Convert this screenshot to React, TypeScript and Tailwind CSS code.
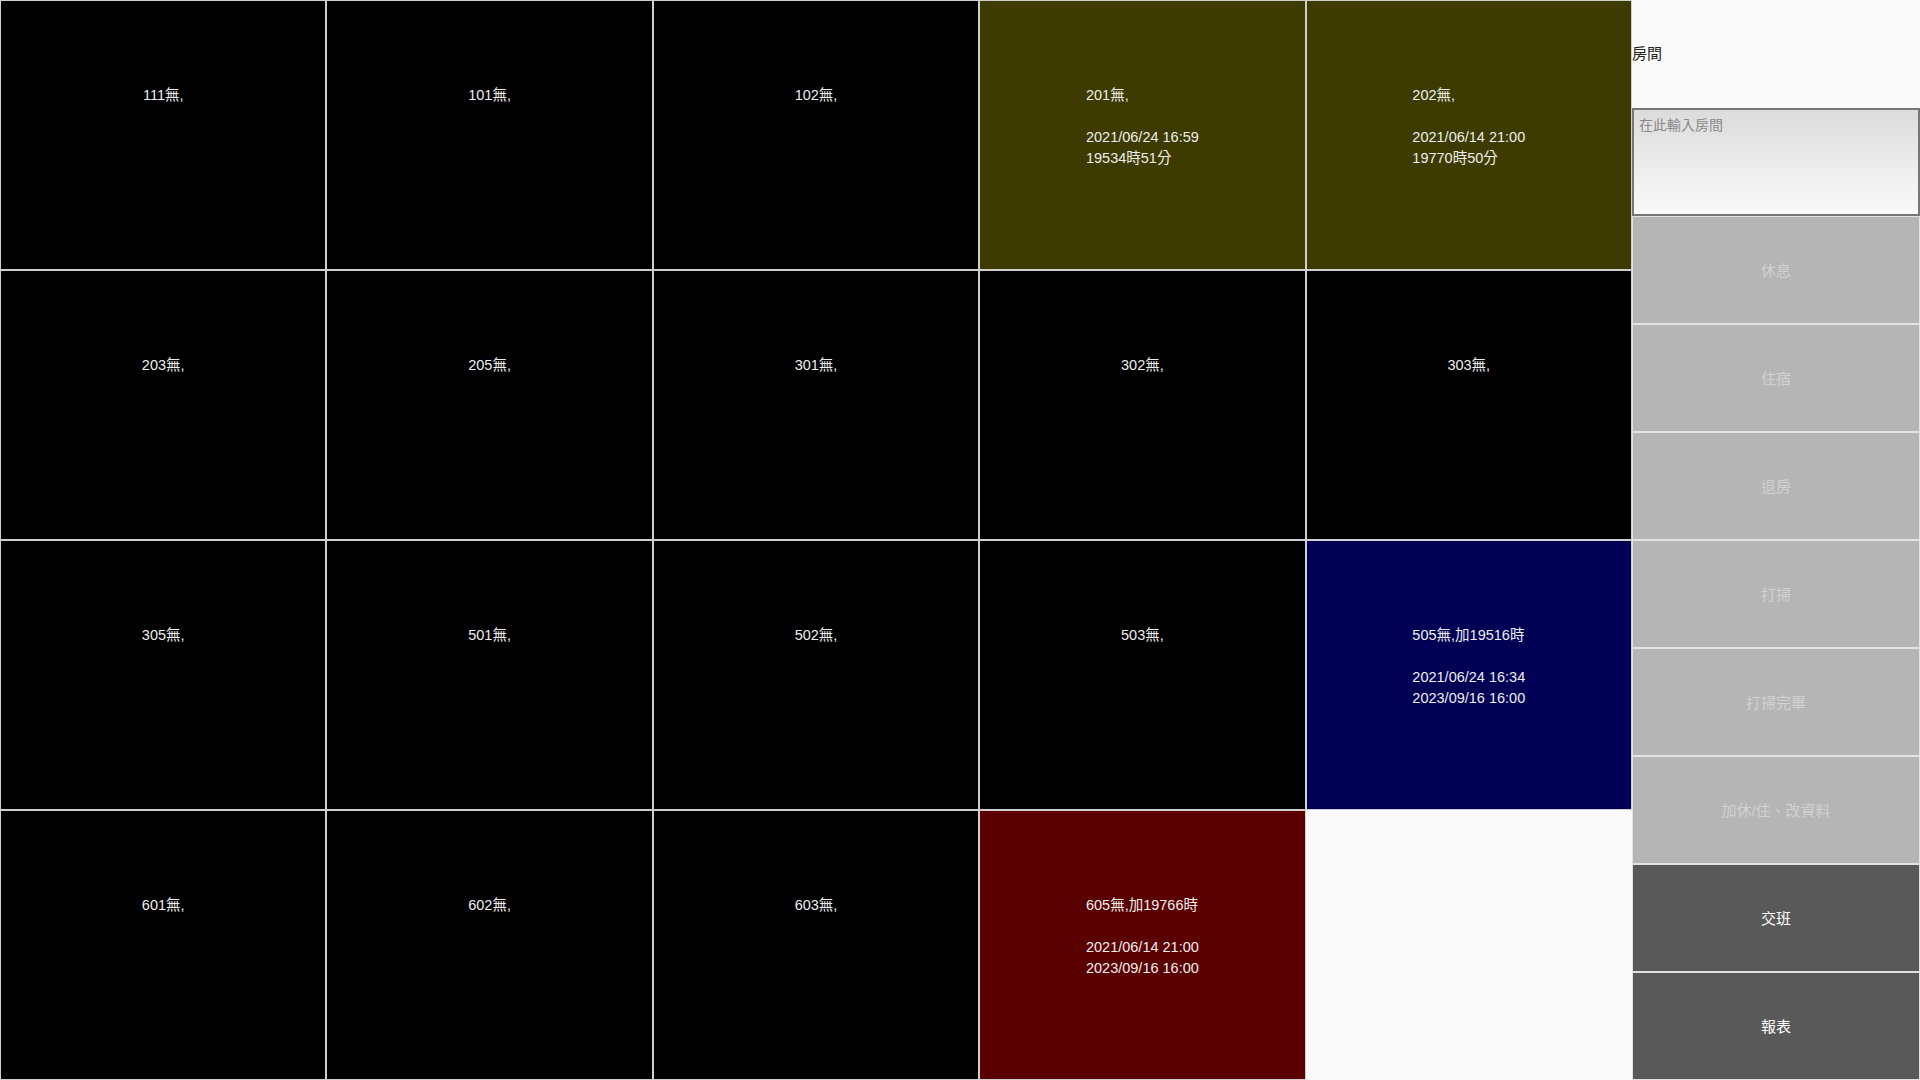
type Room = {
  title: string
  lines?: string[]
  bg: string
}

const rooms: Room[] = [
  { title: '111無,', bg: 'bg-black' },
  { title: '101無,', bg: 'bg-black' },
  { title: '102無,', bg: 'bg-black' },
  { title: '201無,', lines: ['2021/06/24 16:59', '19534時51分'], bg: 'bg-[#3d3b00]' },
  { title: '202無,', lines: ['2021/06/14 21:00', '19770時50分'], bg: 'bg-[#3d3b00]' },
  { title: '203無,', bg: 'bg-black' },
  { title: '205無,', bg: 'bg-black' },
  { title: '301無,', bg: 'bg-black' },
  { title: '302無,', bg: 'bg-black' },
  { title: '303無,', bg: 'bg-black' },
  { title: '305無,', bg: 'bg-black' },
  { title: '501無,', bg: 'bg-black' },
  { title: '502無,', bg: 'bg-black' },
  { title: '503無,', bg: 'bg-black' },
  { title: '505無,加19516時', lines: ['2021/06/24 16:34', '2023/09/16 16:00'], bg: 'bg-[#000055]' },
  { title: '601無,', bg: 'bg-black' },
  { title: '602無,', bg: 'bg-black' },
  { title: '603無,', bg: 'bg-black' },
  { title: '605無,加19766時', lines: ['2021/06/14 21:00', '2023/09/16 16:00'], bg: 'bg-[#5a0000]' },
]

const actions = [
  { label: '休息', dark: false },
  { label: '住宿', dark: false },
  { label: '退房', dark: false },
  { label: '打掃', dark: false },
  { label: '打掃完畢', dark: false },
  { label: '加休/住、改資料', dark: false },
  { label: '交班', dark: true },
  { label: '報表', dark: true },
]

function RoomCell({ room }: { room: Room }) {
  return (
    <div className={`${room.bg} border border-[#cfcfcf] flex justify-center pt-[84px]`}>
      <div className="text-left text-[14.5px] leading-[21px] text-[#eeeeee]">
        <div>{room.title}</div>
        {room.lines && (
          <>
            <div>&nbsp;</div>
            {room.lines.map((l) => (
              <div key={l}>{l}</div>
            ))}
          </>
        )}
      </div>
    </div>
  )
}

export default function App() {
  return (
    <div
      className="w-[1920px] h-[1080px] flex bg-[#fafafa] overflow-hidden"
      style={{ fontFamily: '"Liberation Sans", "Noto Sans CJK TC", sans-serif' }}
    >
      {/* Room grid */}
      <div className="flex-1 grid grid-cols-5 grid-rows-4">
        {rooms.map((r) => (
          <RoomCell key={r.title} room={r} />
        ))}
      </div>

      {/* Side panel */}
      <div className="w-[288px] flex flex-col">
        <div className="h-[108px] flex items-center text-[15px] text-[#222222]">房間</div>
        <div className="h-[108px] border-2 border-[#777777] bg-gradient-to-b from-[#dcdcdc] to-[#fafafa] px-[5px] pt-[3px]">
          <input
            className="w-full bg-transparent outline-none text-[14px] text-[#333333] placeholder:text-[#888888]"
            placeholder="在此輸入房間"
          />
        </div>
        {actions.map((a) => (
          <button
            key={a.label}
            className={`h-[108px] border border-[#e2e2e2] pt-[2px] text-[15px] ${
              a.dark ? 'bg-[#595959] text-white' : 'bg-[#b5b5b5] text-[#d2d2d2]'
            }`}
          >
            {a.label}
          </button>
        ))}
      </div>
    </div>
  )
}
